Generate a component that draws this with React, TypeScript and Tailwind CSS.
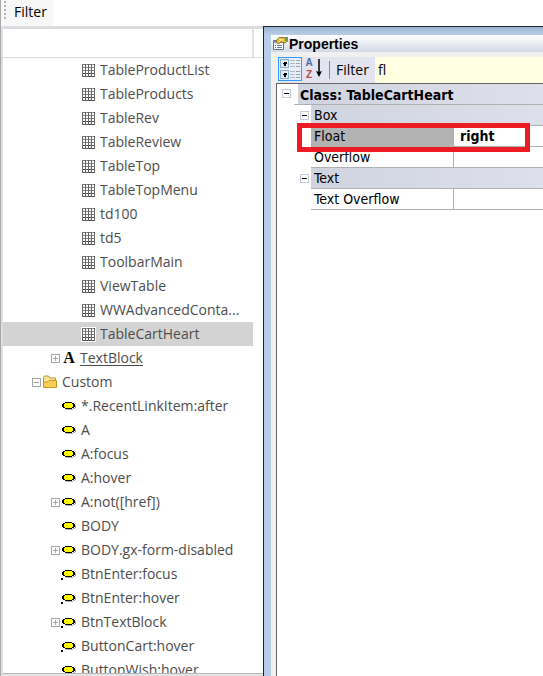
type NodeKind = 'table' | 'text' | 'folder' | 'rule' | 'changed';

interface TreeNode {
  label: string;
  kind: NodeKind;
  expandable?: boolean;
  selected?: boolean;
}

const nodes: TreeNode[] = [
  { label: 'TableProductList', kind: 'table' },
  { label: 'TableProducts', kind: 'table' },
  { label: 'TableRev', kind: 'table' },
  { label: 'TableReview', kind: 'table' },
  { label: 'TableTop', kind: 'table' },
  { label: 'TableTopMenu', kind: 'table' },
  { label: 'td100', kind: 'table' },
  { label: 'td5', kind: 'table' },
  { label: 'ToolbarMain', kind: 'table' },
  { label: 'ViewTable', kind: 'table' },
  { label: 'WWAdvancedConta...', kind: 'table' },
  { label: 'TableCartHeart', kind: 'table', selected: true },
  { label: 'TextBlock', kind: 'text', expandable: true },
  { label: 'Custom', kind: 'folder', expandable: true },
  { label: '*.RecentLinkItem:after', kind: 'rule' },
  { label: 'A', kind: 'rule' },
  { label: 'A:focus', kind: 'rule' },
  { label: 'A:hover', kind: 'rule' },
  { label: 'A:not([href])', kind: 'rule', expandable: true },
  { label: 'BODY', kind: 'rule' },
  { label: 'BODY.gx-form-disabled', kind: 'rule', expandable: true },
  { label: 'BtnEnter:focus', kind: 'changed' },
  { label: 'BtnEnter:hover', kind: 'changed' },
  { label: 'BtnTextBlock', kind: 'changed', expandable: true },
  { label: 'ButtonCart:hover', kind: 'changed' },
  { label: 'ButtonWish:hover', kind: 'changed' },
];

function NodeIcon({ kind }: { kind: NodeKind }) {
  if (kind === 'table') {
    return (
      <svg width="15" height="15" viewBox="0 0 15 15" shapeRendering="crispEdges" className="shrink-0 bg-white">
        <path d="M1 1.5h13M1 4.5h13M1 7.5h13" stroke="#858585" />
        <path d="M1 10.5h13M1 13.5h13" stroke="#505050" />
        <path d="M1.5 1v13M4.5 1v13M7.5 1v13M10.5 1v13M13.5 1v13" stroke="#686868" />
      </svg>
    );
  }
  if (kind === 'text') {
    return <span className="w-4 shrink-0 text-center font-['Liberation_Serif',serif] text-base font-bold text-black">A</span>;
  }
  if (kind === 'folder') {
    return (
      <svg width="16" height="16" viewBox="0 0 16 16" className="shrink-0">
        <path d="M1.5 13V3.5l1-1.5h4l1.5 2h5.5v9z" fill="#f8e39a" stroke="#c09522" />
        <path d="M1.5 13.5V8h4L7 6.500h7.5v7z" fill="#f7cf59" stroke="#c89a1c" />
      </svg>
    );
  }
  return (
    <svg width="16" height="16" viewBox="0 0 16 16" shapeRendering="crispEdges" className="shrink-0">
      <path d="M5 11h7v-1h2V7h1v3h-1v1h-2v1H5z" fill="#b5b5b5" />
      <path d="M4 4h7v1h2v1h1v3h-1v1h-2v1H4v-1H2V9H1V6h1V5h2z" fill="#000" />
      <path d="M4 5h7v1h1v3h-1v1H4V9H3V6h1z" fill="#ffff00" />
      {kind === 'changed' && <path d="M0 12h2v2H0z" fill="#000" />}
    </svg>
  );
}

function TreeToggle({ open }: { open: boolean }) {
  return (
    <button type="button" aria-label={open ? 'Collapse' : 'Expand'} className="flex size-[9px] shrink-0">
      <svg width="9" height="9" viewBox="0 0 9 9" shapeRendering="crispEdges">
        <path d="M.5.5h8v8h-8z" fill="#fff" stroke="#a6a6a6" />
        <path d={open ? 'M2 4.5h5' : 'M2 4.5h5M4.5 2v5'} stroke="#a6a6a6" />
      </svg>
    </button>
  );
}

function GridToggle() {
  return (
    <button type="button" aria-label="Collapse" className="flex size-[9px] shrink-0">
      <svg width="9" height="9" viewBox="0 0 9 9" shapeRendering="crispEdges">
        <path d="M.5.5h8v8h-8z" fill="#fff" stroke="#c5ccd8" />
        <path d="M2 4.5h5" stroke="#000" />
      </svg>
    </button>
  );
}

function TreeRow({ node }: { node: TreeNode }) {
  const folder = node.kind === 'folder';
  const table = node.kind === 'table';
  return (
    <li className={`flex h-6 items-center ${node.selected ? 'mr-2.5 bg-[#d3d3d3]' : ''}`}>
      <span className={`flex shrink-0 items-center justify-end ${folder ? 'w-[38px]' : table ? 'w-[78px]' : 'w-[57px]'}`}>
        {node.expandable && <TreeToggle open={folder} />}
      </span>
      <span className={`flex shrink-0 items-center ${table ? 'w-[19px]' : folder ? 'w-[21px] pl-px' : node.kind === 'text' ? 'w-5 pl-px' : 'w-[21px] pl-px'}`}>
        <NodeIcon kind={node.kind} />
      </span>
      <span className={`whitespace-nowrap ${node.kind === 'text' ? 'underline underline-offset-2' : ''}`}>{node.label}</span>
    </li>
  );
}

function TreePane() {
  return (
    <section className="flex w-[263px] shrink-0 flex-col border-l border-[#a8a8a8] bg-white">
      <div className="flex min-h-0 flex-1 flex-col border-l-2 border-[#dcdfe4]">
        <div className="flex h-8 shrink-0 border-t-3 border-b border-[#dcdce0]">
          <div className="w-[251px] border-r-2 border-[#e2e2e5]" />
        </div>
        <ul className="min-h-0 flex-1 overflow-hidden text-sm text-[#4d4d4d]">
          {nodes.map((node) => (
            <TreeRow key={node.label} node={node} />
          ))}
        </ul>
        <div className="h-[3px] shrink-0 border-t border-[#b8b8b8] bg-[#e3e3e3]" />
      </div>
    </section>
  );
}

function GroupRow({ name }: { name: string }) {
  return (
    <tr className="h-[21px]">
      <td className="p-0">
        <div className="flex justify-end pr-0.5"><GridToggle /></div>
      </td>
      <th colSpan={2} scope="colgroup" className="border-b border-[#b0b0b0] bg-linear-to-r from-[#d0d4de] to-[#dde0ea] p-0 pt-px pl-[3px] text-left font-normal">{name}</th>
    </tr>
  );
}

function PropertyRow({ name, value, active }: { name: string; value: string; active?: boolean }) {
  return (
    <tr className="h-[21px]">
      <td className="p-0" />
      <th scope="row" className={`border-r border-b border-[#b0b0b0] p-0 pt-px pl-[3px] text-left font-normal ${active ? 'bg-[#b3b3b3]' : ''}`}>{name}</th>
      <td className="border-b border-[#b0b0b0] p-0 pt-px pl-1.5 font-bold">{value}</td>
    </tr>
  );
}

function PropertiesPane() {
  return (
    <section className="flex min-w-0 flex-1 flex-col border-t border-l border-[#20222c] bg-[#b9cee6] font-['DejaVu_Sans_Condensed','DejaVu_Sans',sans-serif] text-sm text-black">
      <div className="h-2 shrink-0 bg-linear-to-b from-[#99b4d1] to-[#b9cee6]" />
      <div className="ml-[7px] flex min-h-0 flex-1 flex-col bg-[#f0f0f0]">
        <header className="flex h-[17px] shrink-0 items-center bg-linear-to-b from-white to-[#d3d9e5] pl-px">
          <svg width="17" height="16" viewBox="0 0 17 16" className="shrink-0">
            <path d="M1.5 4.5h10v9h-10z" fill="#f8fbff" stroke="#60758e" />
            <path d="M2 5h9v2H2z" fill="#809dc0" />
            <path d="M3 9.5h1M5 9.5h5M3 11.5h1M5 11.5h5" stroke="#667d9b" />
            <path d="M4 5 7 1.5h5L16 4l-3 3-4-1-3 2z" fill="#edbd3c" stroke="#917329" />
            <path d="m7 3 4 1M7 6l3-3" stroke="#fff3a4" />
            <path d="M13 1h3v5l-3-1z" fill="#62a34a" />
          </svg>
          <h2 className="font-['Liberation_Sans',sans-serif] text-sm leading-4 font-bold">Properties</h2>
        </header>
        <div className="mt-[5px] ml-[7px] flex h-[26px] shrink-0 items-stretch bg-[#e3e4f0]">
          <button type="button" aria-label="Categorized" className="flex size-6 items-center justify-center border border-[#3399ff] bg-[#e5eefa]">
            <svg width="22" height="22" viewBox="0 0 22 22" shapeRendering="crispEdges">
              {[1, 12].map((y) => (
                <g key={y}>
                  <rect x="1.5" y={y + 0.5} width="8" height="8" rx="1" fill="#dcebf7" stroke="#8caec9" />
                  <path d={`M4 ${y + 4}h3v-1h-1v3h-1v-3`} stroke="#000" fill="#000" />
                  <path d={`M11 ${y + 1.5}h5M11 ${y + 4.5}h5M11 ${y + 7.5}h5`} stroke="#b4b8c0" />
                  <path d={`M17 ${y + 1.5}h4M17 ${y + 4.5}h4M17 ${y + 7.5}h4`} stroke="#9da2ac" />
                </g>
              ))}
            </svg>
          </button>
          <button type="button" aria-label="Sort alphabetically" className="flex w-6 shrink-0 items-start pl-0.5">
            <span className="flex w-2.5 flex-col text-center font-['Liberation_Sans',sans-serif] text-[10px] leading-3 font-bold">
              <span className="text-[#5068aa]">A</span>
              <span className="text-[#b44b4b]">Z</span>
            </span>
            <svg width="10" height="22" viewBox="0 0 10 22">
              <path d="M5 2v16" stroke="#000" strokeWidth="1.5" />
              <path d="m2 14 3 6 3-6-3 1z" fill="#000" />
            </svg>
          </button>
          <span className="my-1 ml-[3px] w-px shrink-0 bg-[#85899b]" />
          <label htmlFor="property-filter" className="flex w-[45px] shrink-0 items-center pl-1.5 font-['Open_Sans',sans-serif]">Filter</label>
          <input id="property-filter" defaultValue="fl" className="min-w-0 flex-1 bg-[#ffffe1] px-[3px] font-['Open_Sans',sans-serif] outline-none" />
        </div>
        <div className="relative ml-[5px] min-h-0 flex-1 border-t border-l border-[#646464] bg-white">
          <div className="flex h-[21px] items-stretch">
            <span className="flex w-[17px] items-start pt-[5px] pl-[5px]"><GridToggle /></span>
            <div className="flex flex-1 border-b border-[#b0b0b0] pl-1">
              <h3 className="flex flex-1 items-center bg-linear-to-r from-[#d0d4de] to-[#dde0ea] pt-px pl-0.5 font-bold">Class: TableCartHeart</h3>
            </div>
          </div>
          <table aria-label="Properties of TableCartHeart" className="w-full table-fixed border-separate border-spacing-0 leading-[19px]">
            <colgroup>
              <col className="w-[34px]" />
              <col className="w-[143px]" />
              <col />
            </colgroup>
            <tbody>
              <GroupRow name="Box" />
              <PropertyRow name="Float" value="right" active />
              <PropertyRow name="Overflow" value="" />
              <GroupRow name="Text" />
              <PropertyRow name="Text Overflow" value="" />
            </tbody>
          </table>
          <div className="pointer-events-none absolute top-[39px] left-5 h-[29px] w-[233px] border-5 border-[#ed1c24]" />
        </div>
      </div>
    </section>
  );
}

export default function App() {
  return (
    <main className="flex h-screen flex-col overflow-hidden bg-white font-['Open_Sans','Noto_Sans',sans-serif] text-sm">
      <div className="flex h-[26px] shrink-0 border-l border-[#a8a8a8]">
        <div className="flex items-start bg-[#f7f7f7] pr-1.5 pl-[3px]">
          <svg width="3" height="20" viewBox="0 0 3 20" shapeRendering="crispEdges" className="mr-[7px]">
            <path d="M0 1h2v2H0zM0 5h2v2H0zM0 9h2v2H0zM0 13h2v2H0zM0 17h2v2H0z" fill="#b5b5b5" />
          </svg>
          <button type="button" className="leading-6 text-black">Filter</button>
        </div>
      </div>
      <div className="flex min-h-0 flex-1">
        <TreePane />
        <PropertiesPane />
      </div>
    </main>
  );
}
